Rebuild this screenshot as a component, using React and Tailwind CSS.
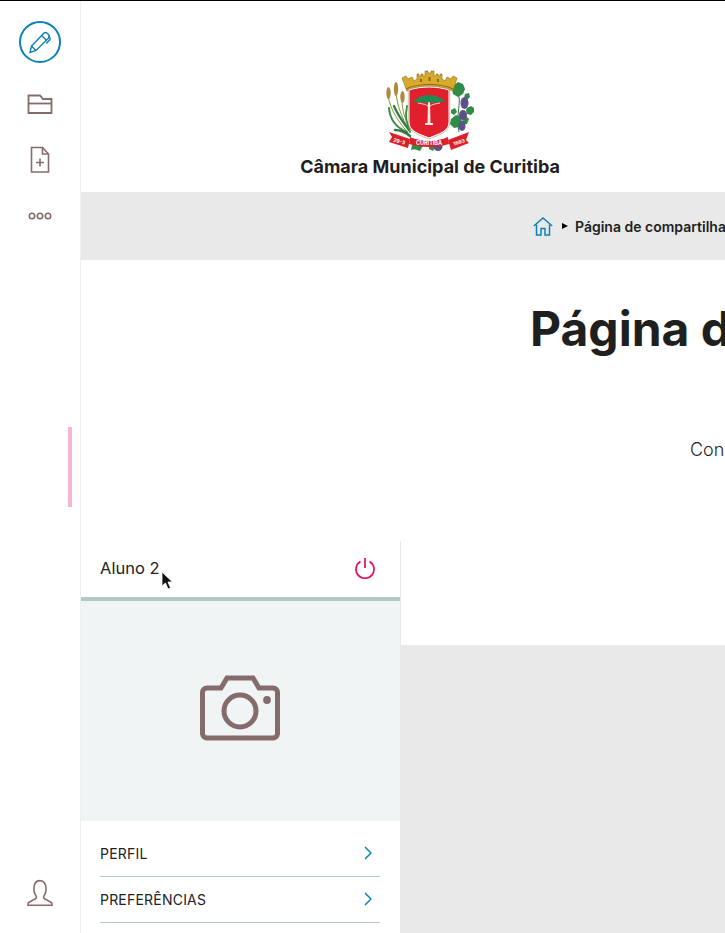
const brown = "#856c6c";

function Crest() {
  return (
    <svg width="90" height="84" viewBox="0 0 90 84" className="block">
      {/* wheat */}
      <g fill="none" strokeLinecap="round">
        <path d="M24 64C14 52 6 42 3 26" stroke="#7d9a3c" strokeWidth="1" />
        <path d="M25 62C17 48 12 36 11 22" stroke="#7d9a3c" strokeWidth="1" />
        <path d="M26 60C20 50 17 40 17 30" stroke="#7d9a3c" strokeWidth="1" />
        <path d="M22 62C12 58 5 50 4 38" stroke="#3f8a48" strokeWidth="2" />
        <path d="M24 60C18 52 13 46 9 36" stroke="#2f7a44" strokeWidth="2.200" />
        <path d="M25 62C21 52 20 46 22 36" stroke="#3f8a48" strokeWidth="1.800" />
        <path d="M10 60C16 60 20 62 25 66" stroke="#2f7a44" strokeWidth="2.500" />
      </g>
      <ellipse cx="3.500" cy="23" rx="2.200" ry="6" fill="#b08a3f" />
      <ellipse cx="11" cy="19" rx="2.200" ry="7" fill="#b08a3f" />
      <ellipse cx="17.500" cy="27" rx="2.200" ry="6" fill="#b08a3f" />
      {/* vine */}
      <path d="M72 22C78 30 70 44 74 62" stroke="#2f7a44" strokeWidth="1" fill="none" />
      <g fill="#2f8c46">
        <path d="M68 16l5-4 5 2 2 5-2 5-5 3-5-3-1-5z" />
        <path d="M80 24l4-1 1 4-3 3-3-2z" />
        <path d="M82 38l4-2 3 2 0 4-3 3-4-1-1-4z" />
        <path d="M66 49l5-4 5 2 1 5-3 5-5 1-4-4z" />
        <path d="M77 47l4-1 3 3-2 5-4 0z" />
        <path d="M66 40l4-2 2 4-3 3-3-2z" />
        <path d="M44 74l4-1 2 4-2 4-4-2z" />
      </g>
      <g fill="#5f4f8a">
        <ellipse cx="79.500" cy="33" rx="4" ry="6" />
        <ellipse cx="78" cy="45" rx="4" ry="5" />
        <ellipse cx="77" cy="56" rx="3.500" ry="5" />
        <ellipse cx="53" cy="77" rx="4.500" ry="4" />
      </g>
      <path d="M27 75c5-2 8-2 11 1l-3 5c-3-1-6-2-9-1z" fill="#2f8c46" />
      {/* crown */}
      <path d="M17 8L21 6L23 9L27 7L29 11L32 9V4H34V6H36V4H38V6H40V1H43V3H46V1H49V6H51V4H53V6H55V4H57V9L60 11L62 7L66 9L68 6L72 8L68 21C56 15 33 15 22 21Z" fill="#d9a92a" stroke="#8a6a1c" strokeWidth=".6" />
      <path d="M21 19C33 13 56 13 68 19" stroke="#8a6a1c" strokeWidth="1.200" fill="none" />
      <g fill="#8a6a1c">
        <rect x="35" y="9" width="2" height="3" />
        <rect x="43.500" y="7" width="2" height="4" />
        <rect x="52" y="9" width="2" height="3" />
      </g>
      {/* shield */}
      <path d="M24 20C36 16 52 16 64 20V52C64 62 53 64 44 68C35 64 24 62 24 52Z" fill="#e21f2d" stroke="#ffffff" strokeWidth="1" />
      <path d="M23.300 19.500C36 15 52 15 64.700 19.500V52C64.700 63 53 65 44 69C35 65 23.300 63 23.300 52Z" fill="none" stroke="#8f8a62" strokeWidth=".5" />
      {/* araucaria */}
      <path d="M43 32H45L45.500 53H48V55H40V53H42.500Z" fill="#f3efe0" />
      <path d="M28 31C33 27 39 25 44 25C50 25 55 27 60 31C56 33 53 32 50 32C48 34 46 33 44 32C42 33 40 34 38 32C35 32 31 33 28 31Z" fill="#1f8a52" />
      <path d="M33 33C38 34 41 34 44 37C47 34 50 34 55 33" stroke="#f3efe0" strokeWidth=".9" fill="none" />
      {/* ribbon */}
      <path d="M4 62L25 69L23 78L4 72L7 67Z" fill="#dc2028" />
      <path d="M25 67C36 72 52 72 63 67L64 74C52 78 36 78 24 74Z" fill="#dc2028" />
      <path d="M63 70L84 62L81 70L84 73L66 80Z" fill="#dc2028" />
      <text x="44" y="75" textAnchor="middle" fill="#ffffff" fontSize="5.500" fontWeight="700" fontFamily="Inter, sans-serif">CURITIBA</text>
      <text x="14" y="73" textAnchor="middle" fill="#ffffff" fontSize="5" fontWeight="700" fontFamily="Inter, sans-serif" transform="rotate(15 14 72)">29-3</text>
      <text x="74" y="74" textAnchor="middle" fill="#ffffff" fontSize="5" fontWeight="700" fontFamily="Inter, sans-serif" transform="rotate(-18 74 72)">1693</text>
    </svg>
  );
}

function Chevron() {
  return (
    <svg width="8" height="14" viewBox="0 0 8 14" fill="none" stroke="#0f82b4" strokeWidth="1.500">
      <path d="M1 1l6 6-6 6" />
    </svg>
  );
}

function MenuRow({ label }) {
  return (
    <div className="h-[46px] flex items-center justify-between border-b border-[#b5c8ca] pr-2 pb-px text-[14px] tracking-[0.015em] text-[#222222]">
      <span>{label}</span>
      <Chevron />
    </div>
  );
}

export default function App() {
  return (
    <div className="relative h-[933px] w-[725px] overflow-hidden bg-white font-['Inter',sans-serif] text-[#1f1f1f]">
      <div className="h-px bg-black" />
      <div className="flex h-[932px]">
        {/* sidebar */}
        <aside className="relative w-[81px] shrink-0 border-r border-[#eef1f2] flex flex-col items-center pt-5 pr-[1px]">
          <div className="w-[42px] h-[42px] rounded-full border-2 border-[#0a82b3] flex items-center justify-center">
            <svg width="24" height="24" viewBox="0 0 24 24" fill="none" stroke="#0a82b3" strokeWidth="1.400">
              <path d="M2 22.500l1.500-6.500L15.500 3.500c1.200-1.200 2.700-1.200 3.700-.2l1.300 1.300c1 1 1 2.400-.1 3.600L8 20.500z" />
              <path d="M3.500 16l4.500 4.500M13.500 5.500l5 4.800" />
              <path d="M20.500 6.500l1.300 1.300c.6.700.5 1.400 0 2l-3.500 3.700" />
            </svg>
          </div>
          <svg className="mt-[29px]" width="26" height="24" viewBox="0 0 26 24" fill="none" stroke={brown} strokeWidth="1.800">
            <path d="M1.500 21V3.500H13l3 3.500h8.500v14z" />
            <path d="M1.500 11.500h23" />
          </svg>
          <svg className="mt-[30px]" width="20" height="28" viewBox="0 0 20 28" fill="none" stroke={brown} strokeWidth="1.600">
            <path d="M1.500 1.500h11l6 6.500v18h-17z" />
            <path d="M12.500 1.500V8h6" />
            <path d="M10 12.500v8M6 16.500h8" />
          </svg>
          <svg className="mt-[38px]" width="24" height="8" viewBox="0 0 24 8" fill="none" stroke={brown} strokeWidth="1.600">
            <circle cx="4" cy="4" r="2.700" />
            <circle cx="12" cy="4" r="2.700" />
            <circle cx="20" cy="4" r="2.700" />
          </svg>
          <div className="absolute left-[68px] top-[426px] w-1 h-20 bg-[#f7b5d5]" />
          <svg className="mt-auto mb-[26px]" width="26" height="28" viewBox="0 0 26 28" fill="none" stroke={brown} strokeWidth="1.600">
            <path d="M1 26.200h24v-1.400c0-2.400-6.500-3.800-8-5.500-.6-.9-.4-2 .3-3 1.200-1.600 1.800-3.700 1.800-6.200C19.100 5 17 1.600 13 1.600S6.900 5 6.900 10.100c0 2.500.6 4.600 1.800 6.200.7 1 .9 2.100.3 3-1.500 1.700-8 3.100-8 5.500z" />
          </svg>
        </aside>

        {/* main */}
        <main className="flex-1 min-w-0 flex flex-col overflow-hidden">
          <div className="w-[698px] h-[191px] flex flex-col items-center pt-[69px]">
            <Crest />
            <h2 className="mt-[1px] text-[18px] leading-[24px] font-bold whitespace-nowrap">Câmara Municipal de Curitiba</h2>
          </div>
          <div className="h-[68px] shrink-0 bg-[#e9e9e9] flex items-center pl-[452px]">
            <svg width="20" height="19" viewBox="0 0 20 19" fill="none" stroke="#0f82b4" strokeWidth="1.500" className="shrink-0">
              <path d="M.8 9L10 1l9.200 8" />
              <path d="M3.500 7.500V18h4.500v-6.500h4V18h4.500V7.500" />
            </svg>
            <div className="ml-[9px] w-0 h-0 border-y-[3.500px] border-y-transparent border-l-[6px] border-l-black shrink-0" />
            <span className="ml-[7px] text-[14px] font-semibold whitespace-nowrap">Página de compartilhamento</span>
          </div>
          <div className="h-[281px] shrink-0 pl-[449px] pt-[39px] whitespace-nowrap">
            <h1 className="text-[48px] leading-[60px] font-bold">Página de compartilhamento</h1>
            <p className="mt-[79px] pl-[160px] text-[18px] leading-[24px] font-light">Con</p>
          </div>
          <div className="flex-1 flex min-h-0">
            <section className="w-[320px] shrink-0 border-r border-[#e6e9ea] flex flex-col">
              <div className="h-[56px] shrink-0 flex items-center justify-between pl-[19px] pr-[25px] pb-[2px]">
                <span className="text-[16.500px] text-[#222222]">Aluno 2</span>
                <svg width="20" height="22" viewBox="0 0 20 22" fill="none" stroke="#e60a63" strokeWidth="1.700">
                  <path d="M10 1v10" />
                  <path d="M5.500 4.500a9 9 0 1 0 9 0" />
                </svg>
              </div>
              <div className="h-[224px] shrink-0 border-t-4 border-[#b6c7c9] bg-[#f0f4f5] flex items-center justify-center pb-[6px] pr-[2px]">
                <svg width="80" height="66" viewBox="0 0 80 66" fill="none" stroke={brown} strokeWidth="5">
                  <path d="M7 13h14l6-10h26l6 10h14a4.500 4.500 0 0 1 4.500 4.500v41a4.500 4.500 0 0 1-4.500 4.500H7a4.500 4.500 0 0 1-4.500-4.500v-41A4.500 4.500 0 0 1 7 13z" />
                  <circle cx="40" cy="36" r="16" />
                  <circle cx="67" cy="25" r="3.900" fill={brown} stroke="none" />
                </svg>
              </div>
              <div className="pt-[10px] pl-[19px] pr-5 bg-white">
                <MenuRow label="PERFIL" />
                <MenuRow label="PREFERÊNCIAS" />
              </div>
            </section>
            <div className="flex-1 flex flex-col">
              <div className="h-[104px] shrink-0 bg-white" />
              <div className="flex-1 bg-[#e9e9e9]" />
            </div>
          </div>
        </main>
      </div>
      {/* mouse pointer */}
      <svg className="absolute left-[161px] top-[571px]" width="13" height="20" viewBox="0 0 13 20">
        <path d="M1 1v14l3.500-3 2.500 6 2.500-1-2.500-6h4.500z" fill="#111111" stroke="#ffffff" strokeWidth=".8" />
      </svg>
    </div>
  );
}
